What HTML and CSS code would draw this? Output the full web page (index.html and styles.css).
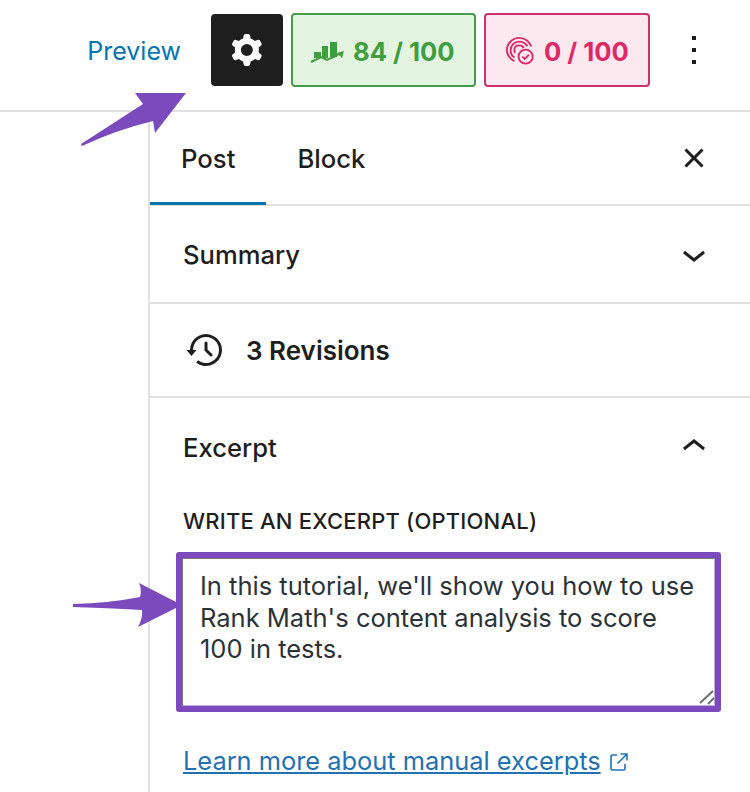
FILE: index.html
```html
<!DOCTYPE html>
<html lang="en">
<head>
    <meta charset="UTF-8">
    <meta name="viewport" content="width=device-width, initial-scale=1.0">
    <title>Post settings</title>
    <link rel="stylesheet" href="styles.css">
</head>
<body>
    <header class="topbar">
        <a class="preview" href="#">Preview</a>
        <button class="settings-btn" type="button" aria-label="Settings">
            <svg viewBox="0 0 24 24" width="48" height="48"><path fill="#fff" fill-rule="evenodd" d="M10.289 4.836A1 1 0 0111.275 4h1.306a1 1 0 01.987.836l.244 1.466c.787.26 1.503.679 2.108 1.218l1.393-.522a1 1 0 011.216.437l.653 1.13a1 1 0 01-.23 1.273l-1.148.944a6.025 6.025 0 010 2.435l1.149.946a1 1 0 01.23 1.272l-.653 1.13a1 1 0 01-1.216.437l-1.394-.522c-.605.54-1.32.958-2.108 1.218l-.244 1.466a1 1 0 01-.987.836h-1.306a1 1 0 01-.986-.836l-.244-1.466a5.995 5.995 0 01-2.108-1.218l-1.394.522a1 1 0 01-1.217-.436l-.653-1.131a1 1 0 01.23-1.272l1.149-.946a6.026 6.026 0 010-2.435l-1.148-.944a1 1 0 01-.23-1.272l.653-1.131a1 1 0 011.217-.437l1.393.522a5.994 5.994 0 012.108-1.218l.244-1.466zM14.929 12a3 3 0 11-6 0 3 3 0 016 0z"/></svg>
        </button>
        <button class="score score-green" type="button">
            <svg viewBox="0 0 34 24" width="34" height="24"><path fill="#3f9e3f" d="M4 13h7v6H4zM12 7h6v12h-6zM20 3h7v15h-7z"/><path fill="none" stroke="#3f9e3f" stroke-width="2" d="M1 23l10-5 6 3 9-4 4-3"/><path fill="#3f9e3f" d="M34 12l-2 7-5-5z"/></svg>
            84 / 100
        </button>
        <button class="score score-pink" type="button">
            <svg viewBox="0 0 32 32" width="30" height="30" fill="none" stroke="#dd2a66" stroke-width="2"><path d="M10 27C5 24 2 20 2 15 2 8 8 2 15 2c6 0 11 4 13 9"/><path d="M10 23c-3-2-4-5-4-8 0-5 4-9 9-9 4 0 7 2 9 5"/><path d="M11 18c-1-1-1-2-1-3 0-3 2-5 5-5 2 0 4 1 5 3"/><circle cx="22" cy="22" r="7.5" fill="#fce8ef"/><path d="M18.5 22l2.5 2.500 4.500-4.500"/></svg>
            0 / 100
        </button>
        <button class="icon-btn" type="button" aria-label="Options">
            <svg viewBox="0 0 24 24" width="48" height="48"><path fill="#1e1e1e" d="M13 19h-2v-2h2v2zm0-6h-2v-2h2v2zm0-6h-2V5h2v2z"/></svg>
        </button>
    </header>

    <aside class="sidebar">
        <div class="tabs">
            <span class="tab active">Post</span>
            <span class="tab">Block</span>
            <button class="icon-btn tabs-close" type="button" aria-label="Close">
                <svg viewBox="0 0 24 24" width="48" height="48"><path fill="#1e1e1e" d="M12 13.06l3.712 3.713 1.061-1.06L13.061 12l3.713-3.712-1.06-1.06L12 10.938 8.288 7.227l-1.061 1.06L10.939 12l-3.712 3.712 1.06 1.061L12 13.061z"/></svg>
            </button>
        </div>

        <section class="panel panel-summary">
            <h2>Summary</h2>
            <svg viewBox="0 0 24 24" width="48" height="48"><path fill="#1e1e1e" d="M17.5 11.600L12 16l-5.500-4.400.9-1.200L12 14l4.600-3.600z"/></svg>
        </section>

        <section class="panel panel-revisions">
            <svg viewBox="0 0 24 24" width="48" height="48"><path fill="#1e1e1e" d="M5.500 12h1.750l-2.500 3-2.500-3H4a8 8 0 113.134 6.350l.907-1.194A6.500 6.500 0 105.500 12zm9.530 1.970l-2.280-2.280V8.500a.75.75 0 00-1.500 0V12a.747.747 0 00.218.529l2.500 2.500a.75.75 0 101.062-1.059z"/></svg>
            <span>3 Revisions</span>
        </section>

        <section class="excerpt">
            <div class="excerpt-head">
                <h2>Excerpt</h2>
                <svg viewBox="0 0 24 24" width="48" height="48"><path fill="#1e1e1e" d="M6.500 12.400L12 8l5.500 4.400-.9 1.200L12 10l-4.600 3.600-.9-1.200z"/></svg>
            </div>
            <label class="excerpt-label" for="excerpt">Write an excerpt (optional)</label>
            <div class="highlight">
                <textarea id="excerpt">In this tutorial, we'll show you how to use Rank Math's content analysis to score 100 in tests.</textarea>
                <svg class="grip" viewBox="0 0 16 16" width="16" height="16" stroke="#6f6f6f" stroke-width="2"><path d="M1 14L14 2M9 15l6-6"/></svg>
            </div>
            <a class="learn" href="#">Learn more about manual excerpts</a>
            <svg class="external" viewBox="0 0 20 20" width="20" height="20" fill="none" stroke="#2271b1" stroke-width="1.600"><path d="M8 3H3.500A1.500 1.500 0 002 4.500v12A1.500 1.500 0 003.500 18h11a1.500 1.500 0 001.500-1.500V12"/><path d="M8.500 11.500L18 2M11.500 2H18v6.500"/></svg>
        </section>
    </aside>

    <!-- annotation arrows -->
    <svg class="arrow arrow-top" viewBox="0 0 110 66" width="110" height="66"><path fill="#7b4bbd" d="M1 54Q32 34 63 14L55 3H106L75 43 73 31Q36 40 2 56z"/></svg>
    <svg class="arrow arrow-left" viewBox="0 0 112 50" width="112" height="50"><path fill="#7b4bbd" d="M1 23Q38 22 68 16 70 9 67 2L110 24 66 46Q71 37 70 29 36 27 1 26z"/></svg>
</body>
</html>
```

FILE: styles.css
```css
* {
    box-sizing: border-box;
}
body {
    font-family: Inter, "Liberation Sans", sans-serif;
    background-color: #fff;
    color: #1e1e1e;
    margin: 0;
    padding: 0;
    height: 792px;
    overflow: hidden;
    position: relative;
}
button {
    font-family: inherit;
    cursor: pointer;
}
h2 {
    margin: 0;
    font-size: 25.6px;
    font-weight: 500;
}
.topbar {
    height: 112px;
    padding: 0 32px 10px 0;
    display: flex;
    align-items: center;
    justify-content: flex-end;
    gap: 8px;
    border-bottom: 2px solid #e0e0e0;
}
.preview {
    color: #0675b0;
    font-size: 25px;
    text-decoration: none;
    margin-right: 22px;
    padding-top: 2px;
}
.settings-btn {
    width: 72px;
    height: 72px;
    padding: 0;
    background-color: #1e1e1e;
    border: none;
    border-radius: 4px;
    display: flex;
    align-items: center;
    justify-content: center;
}
.score {
    height: 74px;
    border-width: 2px;
    border-style: solid;
    border-radius: 4px;
    font-size: 25.6px;
    font-weight: 700;
    display: flex;
    align-items: center;
    gap: 9px;
    padding: 2px 0 0;
}
.score-green {
    width: 185px;
    padding-left: 17px;
    color: #3f9e3f;
    background-color: #e3f4e1;
    border-color: #4a9a4e;
}
.score-pink {
    width: 166px;
    padding-left: 19px;
    color: #dd2a66;
    background-color: #fce8ef;
    border-color: #d0306c;
}
.icon-btn {
    width: 48px;
    height: 48px;
    padding: 0;
    margin-left: 12px;
    background: none;
    border: none;
}
.sidebar {
    margin-left: 148px;
    height: 680px;
    border-left: 2px solid #e0e0e0;
}
.tabs {
    height: 94px;
    display: flex;
    align-items: center;
    border-bottom: 2px solid #e0e0e0;
    padding-right: 32px;
}
.tab {
    height: 94px;
    line-height: 96px;
    padding: 0 31px;
    font-size: 25.7px;
    font-weight: 500;
}
.tab.active {
    border-bottom: 3px solid #0675b0;
}
.tabs-close {
    margin-left: auto;
}
.panel {
    display: flex;
    align-items: center;
    border-bottom: 2px solid #e0e0e0;
}
.panel-summary {
    height: 98px;
    justify-content: space-between;
    padding: 0 32px 0 33px;
}
.panel-revisions {
    height: 94px;
    padding: 0 0 0 32px;
    gap: 16px;
    font-size: 26px;
    font-weight: 600;
}
.excerpt {
    padding: 0 29px 0 26px;
}
.excerpt-head {
    height: 98px;
    padding: 0 3px 0 7px;
    display: flex;
    align-items: center;
    justify-content: space-between;
}
.excerpt-label {
    display: block;
    margin: 12px 0 18px 7px;
    font-size: 22px;
    font-weight: 500;
    letter-spacing: 0.2px;
    line-height: 26px;
    text-transform: uppercase;
}
.highlight {
    position: relative;
    height: 160px;
    border: 6px solid #7b4bbd;
    border-radius: 3px;
}
textarea {
    display: block;
    width: 100%;
    height: 100%;
    padding: 11px 16px 12px 17px;
    border: 1px solid #757575;
    border-right-color: #c3ace3;
    border-bottom-color: #c3ace3;
    border-radius: 0;
    font-family: inherit;
    font-size: 25.5px;
    line-height: 31.5px;
    color: #2c3338;
    outline: none;
    resize: none;
}
.grip {
    position: absolute;
    right: 0;
    bottom: 1px;
}
.learn {
    display: inline-block;
    margin: 33px 0 0 7px;
    color: #2271b1;
    font-size: 25.4px;
}
.external {
    margin-left: 4px;
    vertical-align: -2px;
}
.arrow {
    position: absolute;
}
.arrow-top {
    left: 80px;
    top: 90px;
}
.arrow-left {
    left: 72px;
    top: 581px;
}
```
